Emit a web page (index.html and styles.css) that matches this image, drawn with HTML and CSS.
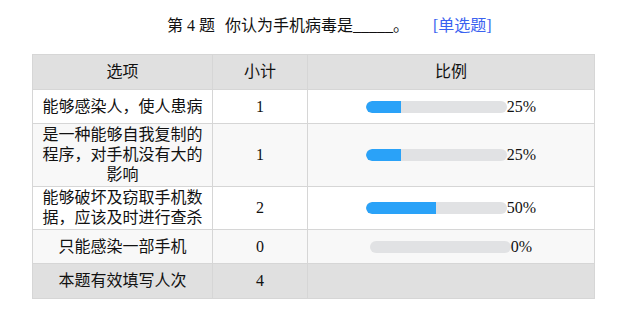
FILE: index.html
```html
<!DOCTYPE html>
<html lang="zh-CN">
<head>
<meta charset="utf-8">
<link rel="stylesheet" href="styles.css">
</head>
<body>
<div class="title"><span class="qnum">第 4 题</span><span class="qtext">你认为手机病毒是_____。</span><span class="qtype">[单选题]</span></div>
<table class="stats">
  <colgroup><col class="c1"><col class="c2"><col class="c3"></colgroup>
  <thead>
    <tr><th>选项</th><th>小计</th><th>比例</th></tr>
  </thead>
  <tbody>
    <tr><td class="opt">能够感染人，使人患病</td><td>1</td><td><div class="ratio"><div class="bar"><div class="fill" style="width:25%"></div></div><span class="pct">25%</span></div></td></tr>
    <tr class="alt"><td class="opt">是一种能够自我复制的程序，对手机没有大的影响</td><td>1</td><td><div class="ratio"><div class="bar"><div class="fill" style="width:25%"></div></div><span class="pct">25%</span></div></td></tr>
    <tr><td class="opt">能够破坏及窃取手机数据，应该及时进行查杀</td><td>2</td><td><div class="ratio"><div class="bar"><div class="fill" style="width:50%"></div></div><span class="pct">50%</span></div></td></tr>
    <tr class="alt"><td class="opt">只能感染一部手机</td><td>0</td><td><div class="ratio"><div class="bar"><div class="fill" style="width:0%"></div></div><span class="pct">0%</span></div></td></tr>
    <tr class="total"><td class="opt">本题有效填写人次</td><td>4</td><td></td></tr>
  </tbody>
</table>
</body>
</html>
```
FILE: styles.css
```css
body {
  margin: 8px;
  font-family: "Liberation Serif", "Noto Sans CJK SC", serif;
  font-size: 16px;
  line-height: 20px;
  color: #111;
  background: #fff;
}
.title {
  padding: 8px 0 0 159px;
  height: 20px;
  margin-bottom: 18px;
  white-space: nowrap;
}
.qnum { margin-right: 10px; }
.qtype { color: #3a62f0; margin-left: 24px; }
.stats {
  margin-left: 24px;
  border-collapse: collapse;
  table-layout: fixed;
  width: 562px;
}
.c1 { width: 180px; }
.c2 { width: 95px; }
.c3 { width: 287px; }
.stats th, .stats td {
  border: 1px solid #d6d6d6;
  text-align: center;
  vertical-align: middle;
  font-weight: normal;
  padding: 1px 6px;
  height: 31px;
}
.stats thead th { background: #e0e0e0; height: 32px; }
.stats tr.alt td { background: #f8f8f8; }
.stats tr.total td { background: #e0e0e0; height: 32px; }
.ratio {
  display: flex;
  align-items: center;
  justify-content: center;
}
.bar {
  width: 141px;
  height: 12px;
  background: #e1e2e4;
  border-radius: 6px;
  overflow: hidden;
}
.fill {
  height: 100%;
  background: #2aa2f8;
  border-radius: 6px 0 0 6px;
}
.pct { line-height: 20px; }
```
